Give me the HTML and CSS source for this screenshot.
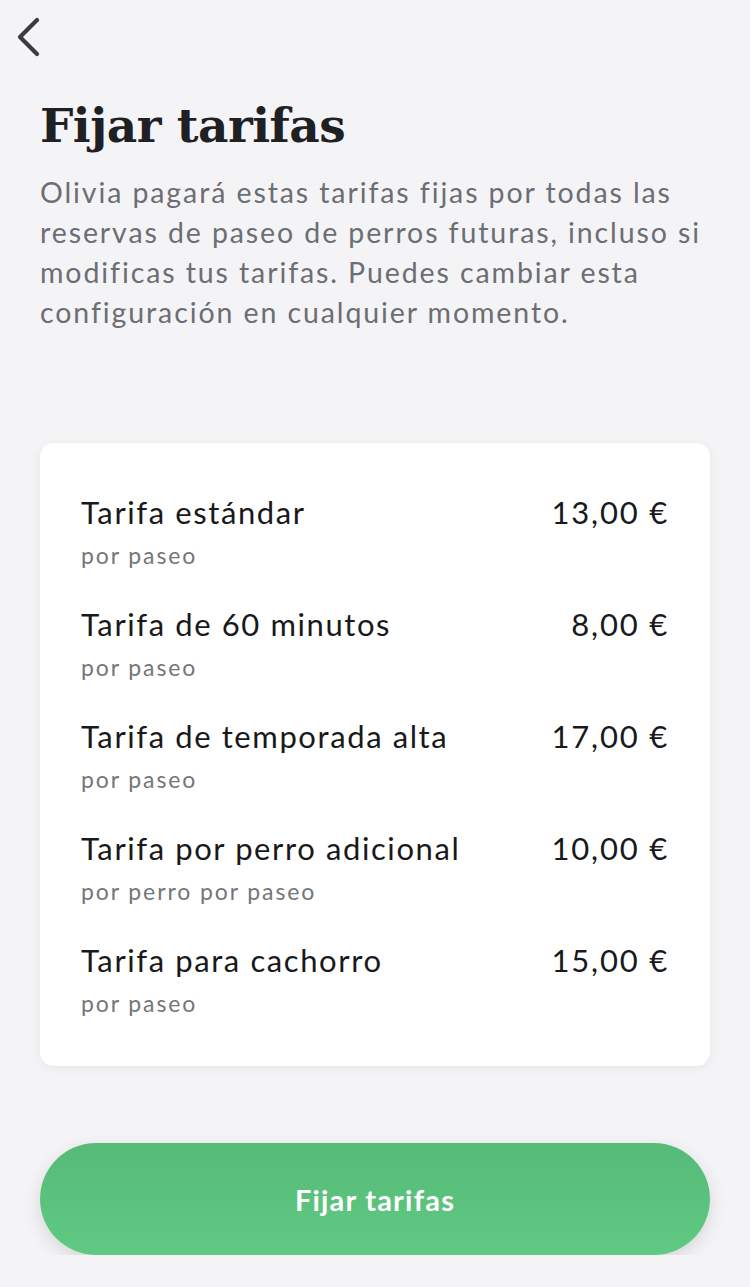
FILE: index.html
```html
<!DOCTYPE html>
<html lang="es">
<head>
    <meta charset="UTF-8">
    <title>Fijar tarifas</title>
    <link rel="stylesheet" href="styles.css">
</head>
<body>
    <header class="topbar">
        <button class="back" aria-label="Volver">
            <svg width="30" height="42" viewBox="0 0 30 42">
                <path d="M24 4 L7 21 L24 38" fill="none" stroke="#3b3c40" stroke-width="4.2" stroke-linecap="round" stroke-linejoin="round"/>
            </svg>
        </button>
    </header>
    <main class="page">
        <h1 class="title">Fijar tarifas</h1>
        <p class="intro">Olivia pagará estas tarifas fijas por todas las reservas de paseo de perros futuras, incluso si modificas tus tarifas. Puedes cambiar esta configuración en cualquier momento.</p>

        <section class="card">
            <div class="rate">
                <div class="rate-info">
                    <div class="rate-name">Tarifa estándar</div>
                    <div class="rate-unit">por paseo</div>
                </div>
                <div class="rate-price">13,00 €</div>
            </div>
            <div class="rate">
                <div class="rate-info">
                    <div class="rate-name">Tarifa de 60 minutos</div>
                    <div class="rate-unit">por paseo</div>
                </div>
                <div class="rate-price">8,00 €</div>
            </div>
            <div class="rate">
                <div class="rate-info">
                    <div class="rate-name">Tarifa de temporada alta</div>
                    <div class="rate-unit">por paseo</div>
                </div>
                <div class="rate-price">17,00 €</div>
            </div>
            <div class="rate">
                <div class="rate-info">
                    <div class="rate-name">Tarifa por perro adicional</div>
                    <div class="rate-unit">por perro por paseo</div>
                </div>
                <div class="rate-price">10,00 €</div>
            </div>
            <div class="rate">
                <div class="rate-info">
                    <div class="rate-name">Tarifa para cachorro</div>
                    <div class="rate-unit">por paseo</div>
                </div>
                <div class="rate-price">15,00 €</div>
            </div>
        </section>

        <button class="primary">Fijar tarifas</button>
    </main>
</body>
</html>
```

FILE: styles.css
```css
body {
    margin: 0;
    background: #f4f4f6;
    font-family: 'Lato', 'Open Sans', sans-serif;
    color: #1c1c1e;
}
.topbar {
    height: 76px;
    padding: 16px 0 0 13px;
    box-sizing: border-box;
}
.back {
    background: none;
    border: none;
    padding: 0;
    cursor: pointer;
}
.back svg {
    display: block;
}
.page {
    padding: 0 40px;
}
.title {
    margin: 18px 0 0;
    font-family: 'DejaVu Serif', serif;
    font-size: 47px;
    font-weight: bold;
    line-height: 64px;
    color: #1f2023;
    letter-spacing: -0.5px;
}
.intro {
    margin: 14px 0 0;
    font-size: 28.5px;
    line-height: 40px;
    letter-spacing: 1.9px;
    color: #6b6e74;
}
.card {
    margin-top: 111px;
    background: #ffffff;
    border-radius: 14px;
    padding: 48px 41px 15px 41px;
    box-shadow: 0 2px 10px rgba(0,0,0,0.06);
}
.rate {
    display: flex;
    justify-content: space-between;
    align-items: flex-start;
    height: 112px;
}
.rate-name {
    font-size: 31px;
    line-height: 42px;
    letter-spacing: 1.6px;
    color: #18191b;
}
.rate-unit {
    margin-top: 1px;
    font-size: 23px;
    line-height: 42px;
    letter-spacing: 1.9px;
    color: #73767b;
}
.rate-price {
    font-size: 31px;
    line-height: 42px;
    letter-spacing: 1.8px;
    color: #18191b;
}
.primary {
    display: block;
    width: 100%;
    height: 112px;
    margin-top: 77px;
    border: none;
    border-radius: 56px;
    background: linear-gradient(#56ba78, #5fca83);
    color: #ffffff;
    font-family: 'Lato', sans-serif;
    font-size: 29px;
    font-weight: bold;
    letter-spacing: 1.2px;
    box-shadow: 0 6px 18px rgba(0,0,0,0.12);
    cursor: pointer;
}
```
